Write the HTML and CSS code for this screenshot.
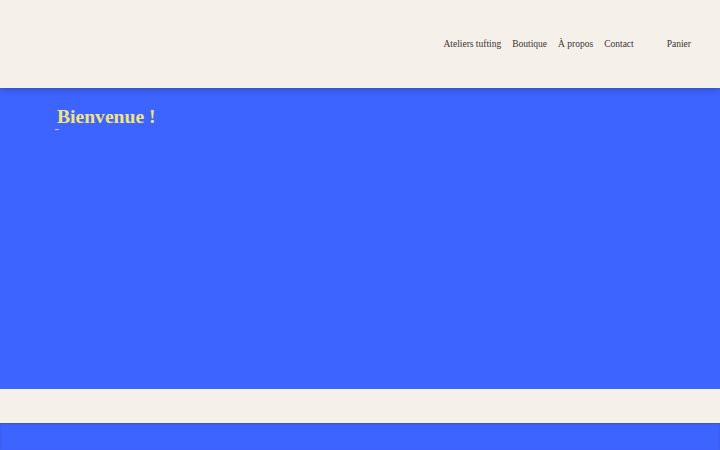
FILE: index.html
```html
<!DOCTYPE html>
<html lang="fr">
<head>
<meta charset="utf-8">
<link rel="stylesheet" href="styles.css">
</head>
<body>
<header class="header">
  <nav class="nav">
    <a class="nav-link" href="#">Ateliers tufting</a>
    <a class="nav-link" href="#">Boutique</a>
    <a class="nav-link" href="#">À propos</a>
    <a class="nav-link" href="#">Contact</a>
    <a class="nav-link cart" href="#">Panier</a>
  </nav>
</header>
<main>
  <section class="hero">
    <h1 class="title">Bienvenue !</h1>
    <span class="mark"></span>
  </section>
  <div class="band"></div>
  <section class="hero2"></section>
</main>
</body>
</html>
```
FILE: styles.css
```css
* { box-sizing: border-box; }
html, body { margin: 0; padding: 0; }
body {
  background: #f5f1ea;
  font-family: "Liberation Serif", "DejaVu Serif", serif;
  overflow: hidden;
  height: 450px;
}
.header {
  height: 88px;
  background: #f5f1ea;
  display: flex;
  align-items: center;
  justify-content: flex-end;
  padding-right: 29px;
  position: relative;
  z-index: 2;
  box-shadow: 0 2px 6px rgba(40, 40, 80, 0.35);
}
.nav {
  display: flex;
  align-items: center;
  gap: 11px;
}
.nav-link {
  font-size: 9.5px;
  color: #3b3131;
  text-decoration: none;
}
.nav-link.cart { margin-left: 22px; }
.hero {
  height: 301px;
  background: #3e64ff;
  padding: 16px 0 0 57px;
}
.title {
  margin: 0;
  font-size: 19.6px;
  font-weight: bold;
  color: #f3e47b;
  line-height: 25px;
}
.mark {
  display: block;
  width: 4px;
  height: 1px;
  background: #f0c0d0;
  margin: 0 0 0 -2px;
}
.band {
  height: 34px;
  background: #f5f1ea;
}
.hero2 {
  height: 27px;
  background: #3e64ff;
  box-shadow: inset 0 1px 2px rgba(40,40,80,0.3);
}
```
